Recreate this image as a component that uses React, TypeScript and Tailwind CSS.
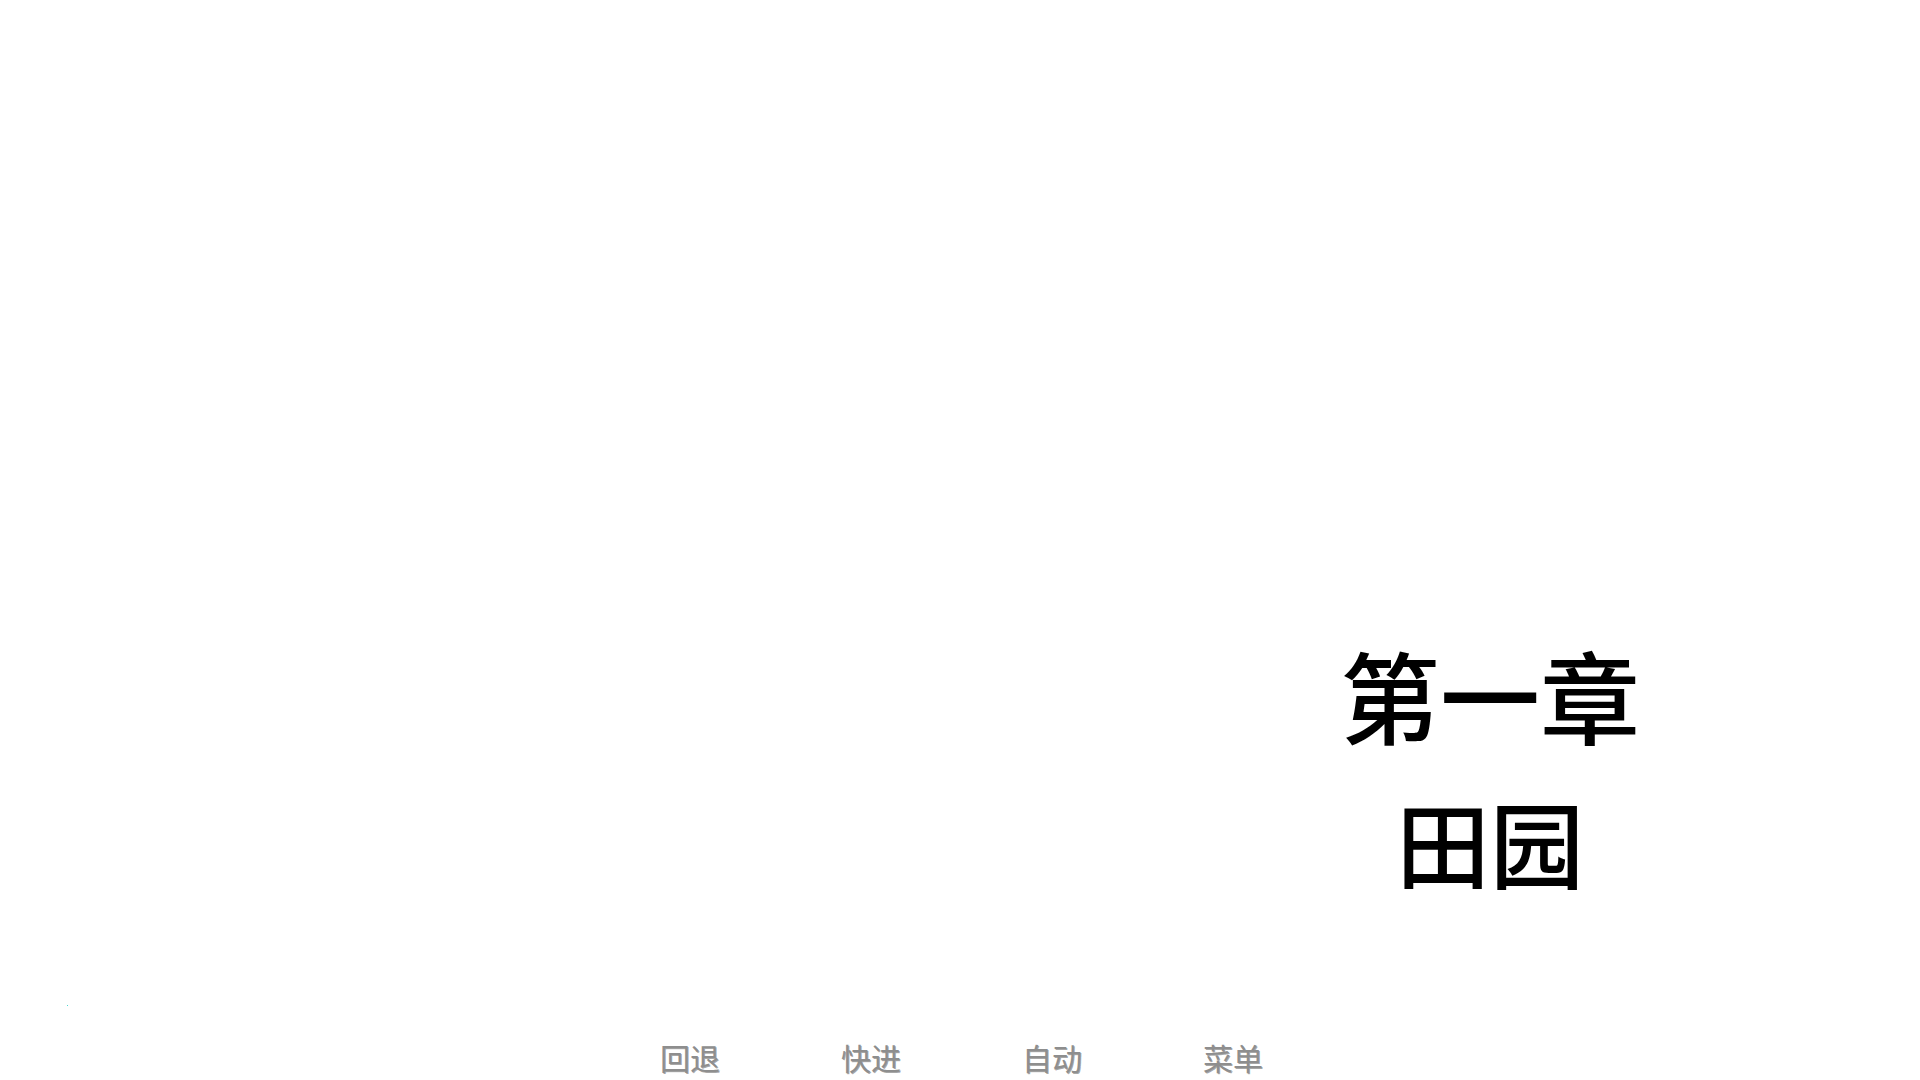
const menu = ["回退", "快进", "自动", "菜单"];

export default function App() {
  return (
    <div
      className="relative flex h-[1080px] w-[1920px] flex-col overflow-hidden bg-white"
      style={{ fontFamily: '"Noto Sans CJK SC", "Noto Sans", sans-serif' }}
    >
      <div className="flex-1">
        <div className="ml-[1290px] w-[400px] pt-[644px] text-center text-black">
          <h1 className="text-[100px] font-medium leading-none">第一章</h1>
          <h2 className="mt-[50px] text-[94px] font-medium leading-none">田园</h2>
        </div>
      </div>

      {/* stray dot in the lower left */}
      <span className="absolute left-[67px] top-[1005px] h-px w-px bg-[#4dd9d0]" />

      <nav className="flex h-[38px] items-start gap-[121px] pl-[660px]">
        {menu.map((label) => (
          <button
            key={label}
            className="w-[60px] text-left text-[30px] leading-none text-[#8e8e8e] [text-shadow:1px_1px_0_rgba(0,0,0,0.35)]"
          >
            {label}
          </button>
        ))}
      </nav>
    </div>
  );
}
